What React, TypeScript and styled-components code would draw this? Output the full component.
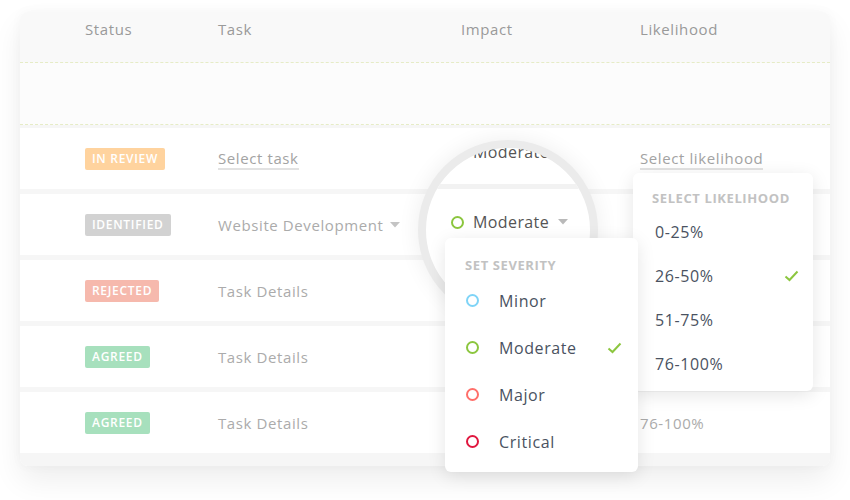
import React from "react";
import styled, { createGlobalStyle } from "styled-components";

const GlobalStyle = createGlobalStyle`
  body {
    margin: 0;
    background: #fff;
    font-family: "Open Sans", "Liberation Sans", sans-serif;
  }
`;

const GREEN = "#8cc63f";

const Page = styled.div`
  position: relative;
  width: 850px;
  height: 500px;
  padding: 12px 20px 0;
  box-sizing: border-box;
  overflow: hidden;
`;

const Card = styled.div`
  background: #fff;
  border-radius: 8px;
  overflow: hidden;
  box-shadow: 0 14px 30px rgba(0, 0, 0, 0.07), 0 0 12px rgba(0, 0, 0, 0.03);
`;

const Columns = styled.div`
  display: grid;
  grid-template-columns: 133px 243px 179px 1fr;
  padding-left: 65px;
  align-items: center;
`;

const HeaderRow = styled(Columns)`
  height: 51px;
  box-sizing: border-box;
  align-items: start;
  padding-top: 7px;
  background: #f9f9f9;
  border-bottom: 1px dashed #e6ecc6;
  color: #9a9a9a;
  font-size: 15px;
  line-height: 20px;
  letter-spacing: 0.6px;
`;

const EmptyRow = styled.div`
  height: 62px;
  box-sizing: border-box;
  background: #fcfcfc;
  border-bottom: 1px dashed #e6ecc6;
`;

const Body = styled.div`
  display: flex;
  flex-direction: column;
  gap: 5px;
  padding: 3px 0 13px;
  background: #f6f6f6;
`;

const Row = styled(Columns)`
  height: 61px;
  background: #fff;
`;

const Badge = styled.span<{ $color: string }>`
  justify-self: start;
  height: 22px;
  padding: 0 7px;
  border-radius: 2px;
  background: ${({ $color }) => $color};
  color: #fff;
  font-size: 12px;
  font-weight: 600;
  line-height: 22px;
  letter-spacing: 0.7px;
`;

const CellText = styled.span`
  color: #ababab;
  font-size: 15px;
  letter-spacing: 0.6px;
  display: flex;
  align-items: center;
  gap: 6px;
`;

const LinkText = styled.span`
  justify-self: start;
  color: #a3a3a3;
  font-size: 15px;
  line-height: 20px;
  letter-spacing: 0.6px;
  border-bottom: 2px solid #e2e2e2;
`;

const Caret = ({ color = "#c4c4c4" }: { color?: string }) => (
  <svg width="10" height="6" viewBox="0 0 10 6">
    <path d="M0 0 H10 L5 5.5 Z" fill={color} />
  </svg>
);

const Check = () => (
  <svg width="15" height="12" viewBox="0 0 15 12">
    <path d="M1.5 6.5 L5.5 10 L13.5 1.5" fill="none" stroke={GREEN} strokeWidth="2" />
  </svg>
);

const Dot = styled.span<{ $color: string }>`
  width: 13px;
  height: 13px;
  box-sizing: border-box;
  border-radius: 50%;
  border: 2px solid ${({ $color }) => $color};
  flex-shrink: 0;
`;

/* magnifier lens over the impact column */
const Lens = styled.div`
  position: absolute;
  left: 418px;
  top: 140px;
  width: 180px;
  height: 180px;
  box-sizing: border-box;
  border-radius: 50%;
  border: 8px solid #ebebeb;
  background: #fff;
  overflow: hidden;
  box-shadow: 0 0 22px rgba(0, 0, 0, 0.07);
`;

const LensInner = styled.div`
  display: flex;
  flex-direction: column;
  margin-top: -7px;
`;

const LensTop = styled.div`
  height: 43px;
  padding-left: 47px;
  color: #555;
  font-size: 16px;
  line-height: 22px;
  letter-spacing: 0.4px;
`;

const LensBand = styled.div`
  height: 5px;
  background: #f2f2f2;
`;

const LensRow = styled.div`
  display: flex;
  align-items: center;
  gap: 9px;
  height: 66px;
  padding-left: 25px;
  color: #555;
  font-size: 16px;
  letter-spacing: 0.4px;
`;

const Menu = styled.div<{ $left: number; $top: number; $width: number }>`
  position: absolute;
  left: ${({ $left }) => $left}px;
  top: ${({ $top }) => $top}px;
  width: ${({ $width }) => $width}px;
  box-sizing: border-box;
  background: #fff;
  border-radius: 6px;
  box-shadow: 0 4px 18px rgba(0, 0, 0, 0.1);
`;

const MenuTitle = styled.div<{ $pad: number; $top: number; $gap: number }>`
  padding: ${({ $top }) => $top}px 0 0 ${({ $pad }) => $pad}px;
  margin-bottom: ${({ $gap }) => $gap}px;
  color: #c2c2c2;
  font-size: 13px;
  font-weight: 700;
  line-height: 18px;
  letter-spacing: 0.6px;
`;

const MenuList = styled.div<{ $bottom: number }>`
  display: flex;
  flex-direction: column;
  padding-bottom: ${({ $bottom }) => $bottom}px;
`;

const MenuItem = styled.div<{ $height: number; $pad: number; $right: number }>`
  display: flex;
  align-items: center;
  height: ${({ $height }) => $height}px;
  padding: 0 ${({ $right }) => $right}px 0 ${({ $pad }) => $pad}px;
  color: #4a5261;
  font-size: 16px;
  letter-spacing: 0.6px;
`;

const ItemLabel = styled.span<{ $indent?: number }>`
  flex: 1;
  margin-left: ${({ $indent = 0 }) => $indent}px;
`;

const rows = [
  { status: "IN REVIEW", color: "#ffd39e", task: "link" },
  { status: "IDENTIFIED", color: "#d2d2d2", task: "dev" },
  { status: "REJECTED", color: "#f6b9ad", task: "details" },
  { status: "AGREED", color: "#a7e0bd", task: "details" },
  { status: "AGREED", color: "#a7e0bd", task: "details" },
];

const severities = [
  { label: "Minor", color: "#7fd4f7" },
  { label: "Moderate", color: GREEN, checked: true },
  { label: "Major", color: "#ff6f6a" },
  { label: "Critical", color: "#e0173f" },
];

const likelihoods = ["0-25%", "26-50%", "51-75%", "76-100%"];

export default function App() {
  return (
    <Page>
      <GlobalStyle />
      <Card>
        <HeaderRow>
          <span>Status</span>
          <span>Task</span>
          <span>Impact</span>
          <span>Likelihood</span>
        </HeaderRow>
        <EmptyRow />
        <Body>
          {rows.map((r, i) => (
            <Row key={i}>
              <Badge $color={r.color}>{r.status}</Badge>
              {r.task === "link" && <LinkText>Select task</LinkText>}
              {r.task === "dev" && (
                <CellText>
                  Website Development <Caret />
                </CellText>
              )}
              {r.task === "details" && <CellText>Task Details</CellText>}
              <span />
              {i === 0 && <LinkText>Select likelihood</LinkText>}
              {i === 4 && <CellText>76-100%</CellText>}
            </Row>
          ))}
        </Body>
      </Card>

      <Lens>
        <LensInner>
          <LensTop>Moderate</LensTop>
          <LensBand />
          <LensRow>
            <Dot $color={GREEN} />
            <span>Moderate</span>
            <Caret color="#b9b9b9" />
          </LensRow>
        </LensInner>
      </Lens>

      <Menu $left={633} $top={173} $width={180}>
        <MenuTitle $pad={19} $top={16} $gap={3}>
          SELECT LIKELIHOOD
        </MenuTitle>
        <MenuList $bottom={5}>
          {likelihoods.map((l) => (
            <MenuItem key={l} $height={44} $pad={22} $right={14}>
              <ItemLabel>{l}</ItemLabel>
              {l === "26-50%" && <Check />}
            </MenuItem>
          ))}
        </MenuList>
      </Menu>

      <Menu $left={445} $top={238} $width={193}>
        <MenuTitle $pad={20} $top={18} $gap={3}>
          SET SEVERITY
        </MenuTitle>
        <MenuList $bottom={7}>
          {severities.map((s) => (
            <MenuItem key={s.label} $height={47} $pad={21} $right={16}>
              <Dot $color={s.color} />
              <ItemLabel $indent={20}>{s.label}</ItemLabel>
              {s.checked && <Check />}
            </MenuItem>
          ))}
        </MenuList>
      </Menu>
    </Page>
  );
}
